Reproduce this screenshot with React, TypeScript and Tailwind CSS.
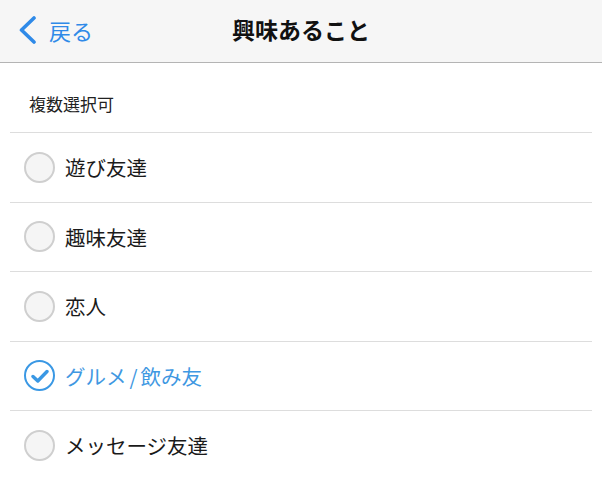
import React from 'react';

const items = [
  { label: '遊び友達', checked: false },
  { label: '趣味友達', checked: false },
  { label: '恋人', checked: false },
  { label: 'グルメ', rest: '飲み友', checked: true },
  { label: 'メッセージ友達', checked: false },
];

const font = { fontFamily: '"Noto Sans CJK JP", "Noto Sans", sans-serif' };

export default function App() {
  return (
    <div className="w-[602px] h-[477px] bg-white overflow-hidden" style={font}>
      {/* Nav bar */}
      <div className="relative h-[63px] bg-[#f6f6f6] border-b border-[#b4b4b4] flex items-center pb-[3px]">
        <div className="absolute left-[17px] top-0 h-full flex items-center gap-[12px] text-[#2f8ae8] pb-[3px]">
          <svg width="20" height="28" viewBox="0 0 20 28" fill="none">
            <path d="M17 2 L4.5 14 L17 26" stroke="#2f8ae8" strokeWidth="3.6" strokeLinecap="round" strokeLinejoin="round" />
          </svg>
          <span className="text-[22px] leading-none">戻る</span>
        </div>
        <div className="w-full text-center text-[23px] font-bold text-[#111] leading-none">興味あること</div>
      </div>

      {/* Section header */}
      <div className="h-[69px] flex items-center pt-[12px] pl-[29px] text-[17px] text-[#222]">複数選択可</div>

      {/* Options */}
      <div className="ml-[10px] mr-[10px]">
        {items.map((item) => (
          <div key={item.label} className="h-[69.5px] border-t border-[#dddddd] flex items-center gap-[10px] pl-[14px]">
            {item.checked ? (
              <div className="w-[31px] h-[31px] rounded-full border-2 border-[#3a98e4] flex items-center justify-center bg-white">
                <svg width="18" height="14" viewBox="0 0 18 14" fill="none">
                  <path d="M2 7.5 L6.8 12 L16 2.5" stroke="#3a98e4" strokeWidth="3.4" strokeLinecap="round" strokeLinejoin="round" />
                </svg>
              </div>
            ) : (
              <div className="w-[31px] h-[31px] rounded-full border-2 border-[#cfcfcf] bg-[#f5f5f5]" />
            )}
            <span className={`text-[20.5px] leading-none ${item.checked ? 'text-[#3f98e2]' : 'text-[#1a1a1a]'}`}>
              {item.label}
              {item.rest && (
                <>
                  <span className="mx-[3px]">/</span>
                  {item.rest}
                </>
              )}
            </span>
          </div>
        ))}
      </div>
    </div>
  );
}
